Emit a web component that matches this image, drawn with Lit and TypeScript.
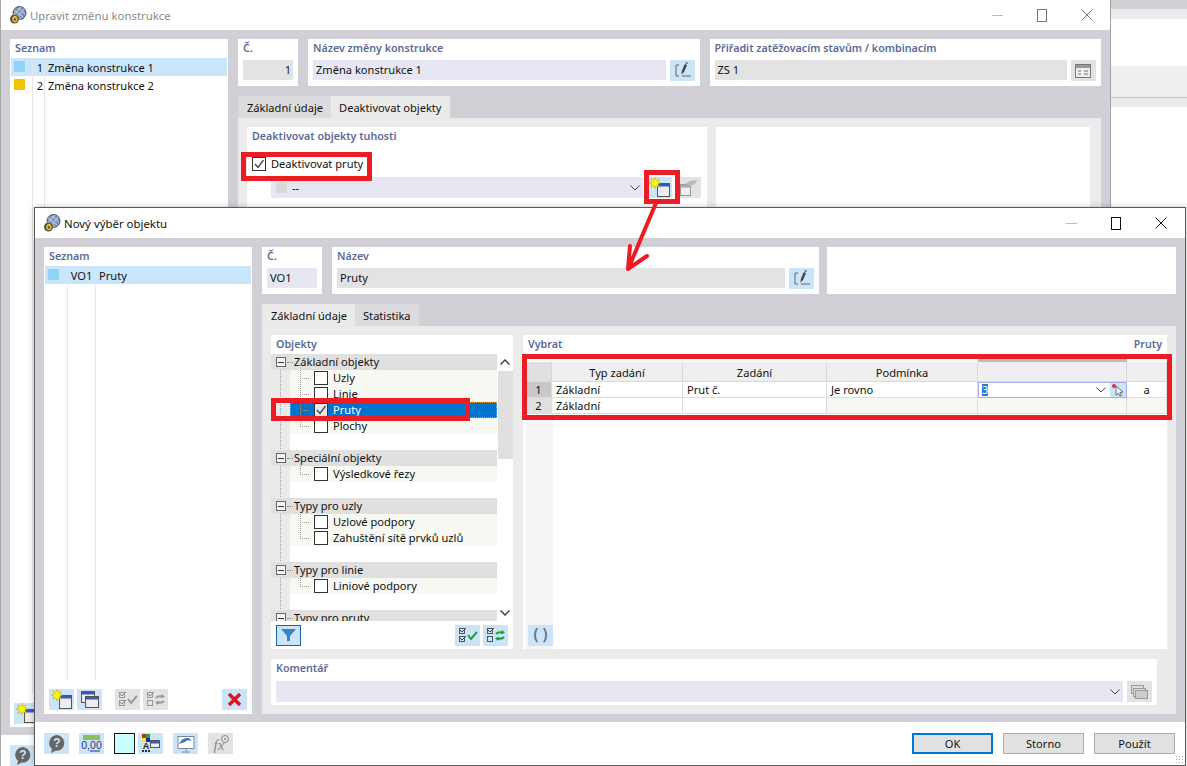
import {LitElement, html, css, svg} from 'lit';
import {customElement} from 'lit/decorators.js';

const star = (x = 5, y = 5, r = 5) => {
	const pts = [];
	for (let i = 0; i < 16; i++) {
		const a = -Math.PI / 2 + (i * Math.PI) / 8;
		const d = i % 2 ? r * 0.5 : r;
		pts.push(`${(x + d * Math.cos(a)).toFixed(1)},${(y + d * Math.sin(a)).toFixed(1)}`);
	}
	return svg`<polygon points=${pts.join(' ')} fill="#fbf500" stroke="#a89a10" stroke-width=".4"/>`;
};

const box = (w: number, h: number, body: unknown) =>
	html`<svg width=${w} height=${h} viewBox="0 0 ${w} ${h}">${body}</svg>`;

const miniWin = (x: number, y: number, w: number, h: number, g = false) => svg`
	<rect x=${x + 0.5} y=${y + 0.5} width=${w} height=${h} fill=${g ? '#eee' : '#ececec'} stroke=${g ? '#999' : '#555'}/>
	<rect x=${x + 1} y=${y + 1} width=${w - 1} height="2.500" fill=${g ? '#aaa' : '#3f57b5'}/>`;

const icons = {
	add: () => box(25, 21, svg`${miniWin(10, 6, 12, 13)}${star(8, 6, 6)}`),
	addOff: () => box(25, 21, svg`${miniWin(4, 7, 10, 11, true)}<path d="M9 7l5-3 7-1-2 4-5 2z" fill="#bbb"/>`),
	copy: () => box(25, 21, svg`${miniWin(4, 2, 13, 11)}${miniWin(8, 7, 13, 11)}`),
	checks: (off = false) =>
		box(25, 21, svg`
		<rect x="4.5" y="3.5" width="5" height="5" fill="none" stroke=${off ? '#999' : '#555'}/>
		<rect x="4.5" y="11.5" width="5" height="5" fill="none" stroke=${off ? '#999' : '#555'}/>
		<path d="M5 5l2 2 4-4M5 13l2 2 4-4" fill="none" stroke=${off ? '#888' : '#444'}/>
		<path d="M13 10l3 4 6-7" fill="none" stroke=${off ? '#999' : '#18a030'} stroke-width="2"/>`),
	swap: (off = false) =>
		box(25, 21, svg`
		<rect x="4.5" y="3.5" width="5" height="5" fill="none" stroke=${off ? '#999' : '#555'}/>
		<rect x="4.5" y="11.5" width="5" height="5" fill="none" stroke=${off ? '#999' : '#555'}/>
		<path d="M5 5l2 2 4-4" fill="none" stroke=${off ? '#888' : '#444'}/>
		<path d="M13 9q3-3 7-1M21 12q-3 3-7 1" fill="none" stroke=${off ? '#999' : '#18a030'} stroke-width="2"/>
		<path d="M19 5l3 3-4 1zM15 16l-3-3 4-1z" fill=${off ? '#999' : '#18a030'}/>`),
	del: () => box(25, 21, svg`<path d="M7 5l11 11M18 5L7 16" stroke="#e8101c" stroke-width="3.4"/>`),
	edit: () => box(25, 21, svg`
		<path d="M9 5H6v11h3M12 16h9" fill="none" stroke="#666"/>
		<path d="M11.500 14.500l.3-3.500 3-7 2.200 1-3 7z" fill="#444"/><path d="M15.300 3l.5-1 2.200 1-.5 1z" fill="#444"/>`),
	table: () => box(25, 21, svg`
		<rect x="4.5" y="4.5" width="15" height="13" fill="#eee" stroke="#777"/>
		<rect x="5" y="5" width="14" height="3" fill="#999"/>
		<path d="M7 11h3M13 11h4M7 14h3M13 14h4" stroke="#777"/>`),
	filter: () => box(25, 21, svg`<path d="M5 5h15l-6 7v5h-3v-5z" fill="#3d80c4"/>`),
	stack: () => box(25, 21, svg`
		<rect x="4.5" y="4.5" width="12" height="8" fill="#ddd" stroke="#999"/>
		<rect x="6.5" y="7.5" width="12" height="8" fill="#ddd" stroke="#999"/>
		<rect x="8.5" y="9.5" width="12" height="8" fill="#ccc" stroke="#999"/>`),
	help: () => box(25, 21, svg`
		<path d="M13 2a8 8 0 0 1 2 15.500a8 8 0 0 1-3 0L7 20l1-4a8 8 0 0 1 5-14z" fill="#666"/>
		<text x="13" y="14" font-size="12" font-weight="700" text-anchor="middle" fill="#cbe4f8" font-family="Liberation Sans">?</text>`),
	num: () => box(25, 21, svg`
		<rect x="4" y="2" width="17" height="5" fill="#8cc05c"/>
		<text x="12.500" y="16" font-size="10.500" text-anchor="middle" fill="#23367c" font-family="Liberation Sans">0,00</text>
		<path d="M11 18h10" stroke="#23367c"/>`),
	colors: () => box(25, 21, svg`
		<rect x="4" y="1" width="4" height="4" fill="#d22"/><rect x="8" y="1" width="4" height="4" fill="#2a2"/>
		<rect x="4" y="5" width="4" height="4" fill="#ee2"/><rect x="8" y="5" width="4" height="4" fill="#22b"/>
		<text x="8" y="16" font-size="9" font-weight="700" text-anchor="middle" fill="#222" font-family="Liberation Sans">A</text>
		<path d="M4 18h2M7 18h2M10 18h2" stroke="#333" stroke-width="2"/>
		${miniWin(12, 7, 9, 7)}`),
	view: () => box(25, 21, svg`
		<rect x="5" y="3.500" width="16" height="12" fill="#fff" stroke="#789"/>
		<path d="M6 11q3-7 10-6l3 3q-5-2-7 1l-3 1z" fill="#3f76ac"/>
		<path d="M13 16v2M9 19h8" stroke="#789"/>`),
	fx: () => box(25, 21, svg`
		<text x="11" y="17" font-size="15" font-style="italic" text-anchor="middle" fill="#888" font-family="Liberation Serif">fx</text>
		<circle cx="17" cy="6" r="3.500" fill="none" stroke="#888"/><circle cx="17" cy="6" r="1" fill="#888"/>`),
	logo: () => box(20, 20, svg`
		<ellipse cx="11.500" cy="8" rx="6.500" ry="6.500" fill="#7d94b8" stroke="#4a5468"/>
		<path d="M6 5l9 7M10 3l7 6M5 9l8 5M13 2l-8 9M16 4l-8 10" stroke="#e4eaf2" stroke-width=".7"/>
		<circle cx="6.500" cy="14" r="4.500" fill="#55554c"/>
		<path d="M8.500 11.500q-3-.5-3.500 2.500a2 2 0 1 0 2-1.500" fill="none" stroke="#f2c41c" stroke-width="1.500"/>`),
	chev: () => box(10, 6, svg`<path d="M.5.5L5 5 9.500.5" fill="none" stroke="#444"/>`),
	check: () => box(12, 12, svg`<path d="M2 6l3 3.500L10.500 2" fill="none" stroke="#444" stroke-width="1.300"/>`),
	pick: () => box(16, 14, svg`<path d="M6 3l7 6-3 .5 1.500 3-1.500.7-1.500-3-2.500 2z" fill="#f4f4f4" stroke="#456" stroke-width=".8"/><circle cx="4" cy="3" r="2" fill="#e03040"/>`),
};

const ctrl = (dim: boolean) => html`
	<div class="ctrl ${dim ? 'dim' : ''}">
		<span class="min"></span><span class="max"></span>
		<svg width="12" height="12" viewBox="0 0 12 12"><path d="M.5.5l11 11M11.500.5l-11 11" stroke="currentColor" fill="none"/></svg>
	</div>`;

const tree = [
	{h: 'Základní objekty', c: ['Uzly', 'Linie', 'Pruty', 'Plochy']},
	{h: 'Speciální objekty', c: ['Výsledkové řezy']},
	{h: 'Typy pro uzly', c: ['Uzlové podpory', 'Zahuštění sítě prvků uzlů']},
	{h: 'Typy pro linie', c: ['Liniové podpory']},
	{h: 'Typy pro pruty', c: []},
];

@customElement('app-root')
export class AppRoot extends LitElement {
	static styles = css`
		:host {
			display: block;
			position: relative;
			width: 1187px;
			height: 766px;
			overflow: hidden;
			background: #fff;
			font: 11.100px 'Noto Sans', 'Liberation Sans', sans-serif;
			color: #111;
		}
		* { box-sizing: border-box; }
		svg { display: block; }

		.desk { display: flex; flex-direction: column; height: 160px; padding-left: 1110px; }
		.desk i { display: block; }
		.d1 { height: 9px; background: #d0d0d5; }
		.d2 { height: 10px; background: #ebebeb; }
		.d3 { height: 47px; background: #fff; }
		.d4 { height: 32px; background: #efefef; border-bottom: 1px solid #c4c4d0; }
		.d5 { height: 9px; background: #ebebeb; }

		.win { position: absolute; display: flex; flex-direction: column; background: #fff; }
		.back { left: 0; top: 0; width: 1111px; height: 766px; border-left: 1px solid #a8a8a8; border-right: 1px solid #a0a0a4; }
		.front { left: 34px; top: 207px; width: 1152px; height: 559px; border: 1px solid #5a5a5a; box-shadow: 0 0 6px rgba(0, 0, 0, .25); }

		.title { height: 30px; flex: none; display: flex; align-items: center; padding-left: 7px; gap: 2px; font-size: 11.400px; }
		.back .title { color: #8a8a8a; }
		.ctrl { margin-left: auto; display: flex; align-items: center; gap: 34px; padding-right: 18px; color: #111; }
		.ctrl.dim { color: #777; padding-right: 17px; }
		.min { width: 11px; border-top: 1px solid #bbb; }
		.max { width: 10px; height: 13px; border: 1px solid currentColor; }
		.front .max { border-width: 1.500px; }

		.body { flex: 1; min-height: 0; display: flex; background: #d0d0d6; padding: 9px 9px 8px; gap: 10px; }
		.foot { flex: none; display: flex; align-items: center; background: #fff; }
		.back .foot { height: 31px; padding: 10px 0 0 9px; }
		.front .foot { height: 43px; padding: 0 10px 0 9px; gap: 10px; position: relative; }

		.panel { background: #fff; }
		.lab { display: block; font-weight: 600; color: #5b6b98; line-height: 16px; padding: 1px 0 0 5px; font-size: 10.700px; white-space: nowrap; }

		.list { display: flex; flex-direction: column; flex: none; }
		.back .list { width: 218px; }
		.front .list { width: 208px; }
		.rows { flex: 1; display: flex; flex-direction: column; min-height: 0; margin-top: 2px; }
		.rw { display: grid; height: 18px; line-height: 20px; margin: 0 1px; white-space: nowrap; }
		.back .rw { grid-template-columns: 21px 12px 1fr; }
		.front .rw { grid-template-columns: 22px 28px 1fr; }
		.rw.sel { background: #cbe6fb; }
		.rw > * { border-left: 1px solid #e4e4e4; }
		.rw > :first-child { border-left: 0; }
		.sw { padding: 3px 0 0 3px; }
		.sw b { display: block; width: 11px; height: 11px; }
		.n { text-align: center; }
		.back .n { text-align: right; padding-right: 1px; }
		.nm { padding-left: 3px; }
		.fill { flex: 1; margin: 0 1px 9px; display: grid; }
		.back .fill { grid-template-columns: 21px 12px 1fr; }
		.front .fill { grid-template-columns: 22px 28px 1fr; }
		.fill i { border-left: 1px solid #e8e8e8; }
		.fill i:first-child { border: 0; }
		.btm { display: flex; align-items: center; height: 21px; margin: 0 0 4px 5px; gap: 3px; }
		.back .btm { margin-left: 4px; margin-bottom: 3px; }

		.ib { width: 25px; height: 21px; flex: none; background: #cbe4f8; }
		.ib.off { background: #e3e3e3; }
		.ib.sel { border: 1.500px solid #1565b0; }
		.ib.sel svg { margin: -1.500px; }
		.sp { width: 7px; }
		.push { margin-left: auto; }
		.delb { margin-right: 5px; }

		.main { flex: 1; min-width: 0; display: flex; flex-direction: column; }
		.top { display: flex; height: 47px; flex: none; gap: 10px; }
		.front .top { gap: 8px; }
		.fld { display: flex; gap: 4px; padding: 0 5px; height: 21px; margin-top: 4px; }
		.inp { flex: 1; min-width: 0; height: 20px; line-height: 20px; padding: 0 3px; background: #e3e3e3; white-space: nowrap; overflow: hidden; }
		.inp.b { background: #e6e7f2; }
		.inp.r { text-align: right; padding-right: 2px; }
		.c { width: 60px; flex: none; }
		.g { flex: 1; min-width: 0; }
		.nazev { width: 487px; flex: none; margin-left: 2px; }

		.tabs { display: flex; height: 22px; flex: none; margin-top: 10px; }
		.tab { line-height: 21px; padding: 1px 8px 0; background: #dcdcdf; white-space: nowrap; }
		.tab:first-child { padding-left: 9px; }
		.tab.on { background: #ebebeb; }
		.page { flex: 1; min-height: 0; background: #ebebeb; padding: 9px; display: flex; flex-direction: column; gap: 9px; }
		.back .page { flex-direction: row; padding-right: 11px; }
		.dp { width: 460px; flex: none; display: flex; flex-direction: column; }
		.cbrow { display: flex; align-items: center; gap: 5px; margin: 13px 0 0 5px; height: 14px; }
		.cbrow span:last-child { margin-bottom: 2px; }
		.cb { width: 14px; height: 14px; flex: none; background: #fff; border: 1px solid #333; display: block; }
		.cmb { display: flex; align-items: center; gap: 4px; margin: 6px 6px 0 24px; }
		.sel-b { flex: 1; display: flex; align-items: center; gap: 5px; height: 21px; padding: 0 3px 0 5px; background: #e6e7f2; min-width: 0; }
		.sel-b span { flex: 1; }
		.sel-b em { width: 11px; height: 11px; background: #d9d9d9; }

		.mid { display: flex; height: 314px; flex: none; gap: 10px; }
		.obj { width: 242px; flex: none; display: flex; flex-direction: column; }
		.treebox { height: 267px; flex: none; overflow: hidden; display: flex; margin-top: 2px; }
		.tree { width: 226px; flex: none; }
		.th, .tc, .tb { height: 16px; display: flex; align-items: center; line-height: 16px; white-space: nowrap; }
		.th { background: #e0e0e0; padding-left: 5px; }
		.exp { width: 10px; height: 10px; border: 1px solid #666; background: #f4f4f4; flex: none; position: relative; margin-right: 1px; }
		.exp::after { content: ''; position: absolute; left: 1px; right: 1px; top: 3.500px; border-top: 1px solid #333; }
		.dots { width: 6px; border-top: 1px dotted #888; margin-right: 1px; }
		.tc, .tb { padding-left: 19px; background-image: repeating-linear-gradient(#a0a0a0 0 1px, transparent 1px 2px); background-size: 1px 100%; background-position: 9px 0; background-repeat: no-repeat; background-color: #ebebeb; }
		.tc > div { flex: 1; height: 16px; background: #f7f8f2; display: flex; align-items: center; gap: 5px; }
		.tb > div { flex: 1; height: 16px; background: #fff; }
		.twig { width: 19px; height: 16px; flex: none; background-image: repeating-linear-gradient(#999 0 1px, transparent 1px 2px), repeating-linear-gradient(90deg, #999 0 1px, transparent 1px 2px); background-repeat: no-repeat; background-size: 1px 100%, 9px 1px; background-position: 10px 0, 10px 8px; }
		.tc.last .twig { background-size: 1px 9px, 9px 1px; }
		.tc.hi > div { background: #0074cc; color: #fff; outline: 1px dotted #e89a30; outline-offset: -1px; }
		.tc.hi .cb { background: #e8e8e8; }
		.scr { flex: 1; display: flex; flex-direction: column; align-items: center; padding-top: 5px; }
		.scr path { stroke-width: 1.500; }
		.thumb { width: 15px; height: 88px; margin-top: 6px; background: #e0e0e0; }
		.scr .down { margin-top: auto; margin-bottom: 5px; }
		.up { transform: scaleY(-1); }
		.otb { flex: 1; display: flex; align-items: center; padding: 0 5px; gap: 3px; }

		.vyb { flex: 1; min-width: 0; display: flex; flex-direction: column; }
		.vh { display: flex; justify-content: space-between; padding-right: 5px; height: 20px; flex: none; }
		.gridw { flex: 1; min-height: 0; margin-left: 3px; background: linear-gradient(90deg, #f5f5f5 27px, #fff 27px); display: flex; flex-direction: column; }
		.tbl { display: grid; grid-template-columns: 26px 131px 144px 151px 149px 40px; grid-template-rows: 7px 20px 16px 16px; line-height: 16px; }
		.tbl > div { border-right: 1px solid #ddd; border-bottom: 1px solid #ddd; padding-left: 4px; white-space: nowrap; overflow: hidden; }
		.tbl .hd { background: #efefef; text-align: center; padding: 3px 0 0; border-color: #d8d8d8; }
		.tbl .corner { background: #e0e0e0; }
		.tbl .rn { background: #e0e0e0; text-align: center; padding: 0; }
		.tbl .rn.a { background: #c8c8c8; }
		.tbl .sliver { background: #fff; padding: 0; border: 0; }
		.tbl .dark { background: #bdbdbd; border: 0; }
		.tbl .soft { background: #f7f8f2; }
		.tbl .ctr { text-align: center; padding: 0; }
		.tbl .ed { display: flex; align-items: center; padding: 0; border: 1px solid #a8aee6; }
		.ed mark { background: #2f7ad0; color: #fff; margin-left: 3px; line-height: 12px; }
		.ed svg:first-of-type { margin-left: auto; margin-right: 4px; }
		.ed .pk { width: 16px; height: 14px; background: #cbe4f8; }
		.pb { margin: auto 0 3px 2px; }
		.par { display: block; text-align: center; line-height: 19px; font-size: 15.500px; font-weight: 600; color: #5f7088; }

		.kom { height: 46px; flex: none; margin: 1px 10px 0 0; }
		.kf { display: flex; gap: 4px; padding: 0 5px; margin-top: 5px; }

		.btn { width: 81px; height: 21px; background: #e1e1e1; border: 1px solid #adadad; text-align: center; line-height: 19px; flex: none; }
		.btn.def { border: 2px solid #0078d7; line-height: 17px; }
		.tools { display: flex; gap: 10px; align-items: center; margin-right: auto; }
		.swatch { width: 21px; height: 21px; background: #c9ffff; border: 1px solid #111; margin-right: -7px; }
		.grip { position: absolute; right: 1px; bottom: 1px; width: 9px; height: 9px; background-image: radial-gradient(#aaa 1px, transparent 1px); background-size: 3px 3px; }

		.mark { position: absolute; border: 5px solid #ed1c24; pointer-events: none; }
		.m1 { left: 241px; top: 152px; width: 131px; height: 29px; }
		.m2 { left: 644px; top: 170px; width: 36px; height: 34px; }
		.m3 { left: 271px; top: 398px; width: 199px; height: 23px; }
		.m4 { left: 522px; top: 354px; width: 650px; height: 66px; }
		.arrow { position: absolute; left: 620px; top: 200px; pointer-events: none; }
	`;

	private list(rows: unknown, bottom: unknown) {
		return html`<div class="panel list">
			<span class="lab">Seznam</span>
			<div class="rows">${rows}<div class="fill"><i></i><i></i><i></i></div></div>
			${bottom}
		</div>`;
	}

	private renderBack() {
		return html`<div class="win back">
			<div class="title">${icons.logo()}<span>Upravit změnu konstrukce</span>${ctrl(true)}</div>
			<div class="body">
				${this.list(
					html`
						<div class="rw sel"><span class="sw"><b style="background:#90d4f5"></b></span><span class="n">1</span><span class="nm">Změna konstrukce 1</span></div>
						<div class="rw"><span class="sw"><b style="background:#f5c400"></b></span><span class="n">2</span><span class="nm">Změna konstrukce 2</span></div>`,
					html`<div class="btm"><div class="ib">${icons.add()}</div></div>`
				)}
				<div class="main">
					<div class="top">
						<div class="panel c"><span class="lab">Č.</span><div class="fld"><div class="inp r">1</div></div></div>
						<div class="panel g"><span class="lab">Název změny konstrukce</span><div class="fld"><div class="inp b">Změna konstrukce 1</div><div class="ib">${icons.edit()}</div></div></div>
						<div class="panel g"><span class="lab">Přiřadit zatěžovacím stavům / kombinacím</span><div class="fld"><div class="inp">ZS 1</div><div class="ib off">${icons.table()}</div></div></div>
					</div>
					<div class="tabs"><div class="tab">Základní údaje</div><div class="tab on">Deaktivovat objekty</div></div>
					<div class="page">
						<div class="panel dp">
							<span class="lab">Deaktivovat objekty tuhosti</span>
							<div class="cbrow"><span class="cb on">${icons.check()}</span><span>Deaktivovat pruty</span></div>
							<div class="cmb">
								<div class="sel-b"><em></em><span>--</span>${icons.chev()}</div>
								<div class="ib">${icons.add()}</div>
								<div class="ib off">${icons.addOff()}</div>
							</div>
						</div>
						<div class="panel g"></div>
					</div>
				</div>
			</div>
			<div class="foot"><div class="ib">${icons.help()}</div></div>
		</div>`;
	}

	private renderTree() {
		return tree.map((g, gi) => html`
			<div class="th"><span class="exp"></span><span class="dots"></span>${g.h}</div>
			${g.c.map((c, i) => html`
				<div class="tc ${c === 'Pruty' ? 'hi' : ''} ${i === g.c.length - 1 ? 'last' : ''}"><div>
					<span class="twig"></span>
					<span class="cb ${c === 'Pruty' ? 'on' : ''}">${c === 'Pruty' ? icons.check() : ''}</span>
					<span>${c}</span>
				</div></div>`)}
			${gi < tree.length - 1 ? html`<div class="tb"><div></div></div>` : ''}`);
	}

	private renderFront() {
		return html`<div class="win front">
			<div class="title">${icons.logo()}<span>Nový výběr objektu</span>${ctrl(false)}</div>
			<div class="body">
				${this.list(
					html`<div class="rw sel"><span class="sw"><b style="background:#90d4f5"></b></span><span class="n">VO1</span><span class="nm">Pruty</span></div>`,
					html`<div class="btm">
						<div class="ib">${icons.add()}</div><div class="ib">${icons.copy()}</div><span class="sp"></span>
						<div class="ib off">${icons.checks(true)}</div><div class="ib off">${icons.swap(true)}</div>
						<div class="ib push delb">${icons.del()}</div>
					</div>`
				)}
				<div class="main">
					<div class="top">
						<div class="panel c"><span class="lab">Č.</span><div class="fld"><div class="inp b">VO1</div></div></div>
						<div class="panel nazev"><span class="lab">Název</span><div class="fld"><div class="inp">Pruty</div><div class="ib">${icons.edit()}</div></div></div>
						<div class="panel g"></div>
					</div>
					<div class="tabs"><div class="tab on">Základní údaje</div><div class="tab">Statistika</div></div>
					<div class="page">
						<div class="mid">
							<div class="panel obj">
								<span class="lab">Objekty</span>
								<div class="treebox">
									<div class="tree">${this.renderTree()}</div>
									<div class="scr">
										<span class="up">${icons.chev()}</span>
										<div class="thumb"></div>
										<span class="down">${icons.chev()}</span>
									</div>
								</div>
								<div class="otb">
									<div class="ib sel">${icons.filter()}</div>
									<div class="ib push">${icons.checks()}</div>
									<div class="ib">${icons.swap()}</div>
								</div>
							</div>
							<div class="panel vyb">
								<div class="vh"><span class="lab">Vybrat</span><span class="lab">Pruty</span></div>
								<div class="gridw">
									<div class="tbl">
										<div class="sliver"></div><div class="sliver"></div><div class="sliver"></div><div class="sliver"></div><div class="dark"></div><div class="sliver"></div>
										<div class="hd corner"></div><div class="hd">Typ zadání</div><div class="hd">Zadání</div><div class="hd">Podmínka</div><div class="hd"></div><div class="hd"></div>
										<div class="rn a">1</div><div>Základní</div><div>Prut č.</div><div>Je rovno</div>
										<div class="ed"><mark>3</mark>${icons.chev()}<span class="pk">${icons.pick()}</span></div>
										<div class="ctr">a</div>
										<div class="rn">2</div><div>Základní</div><div></div><div class="soft"></div><div class="soft"></div><div class="soft"></div>
									</div>
									<div class="ib pb"><span class="par">( )</span></div>
								</div>
							</div>
						</div>
						<div class="panel kom">
							<span class="lab">Komentář</span>
							<div class="kf"><div class="sel-b"><span></span>${icons.chev()}</div><div class="ib off">${icons.stack()}</div></div>
						</div>
					</div>
				</div>
			</div>
			<div class="foot">
				<div class="tools">
					<div class="ib">${icons.help()}</div>
					<div class="ib">${icons.num()}</div>
					<div class="swatch"></div>
					<div class="ib">${icons.colors()}</div>
					<div class="ib">${icons.view()}</div>
					<div class="ib off">${icons.fx()}</div>
				</div>
				<div class="btn def">OK</div><div class="btn">Storno</div><div class="btn">Použít</div>
				<span class="grip"></span>
			</div>
		</div>`;
	}

	render() {
		return html`
			<div class="desk"><i class="d1"></i><i class="d2"></i><i class="d3"></i><i class="d4"></i><i class="d5"></i></div>
			${this.renderBack()}
			${this.renderFront()}
			<div class="mark m1"></div>
			<div class="mark m2"></div>
			<div class="mark m3"></div>
			<div class="mark m4"></div>
			<svg class="arrow" width="60" height="80" viewBox="0 0 60 80">
				<path d="M36 3L9 67M10 46L8 69 27 56" fill="none" stroke="#ed1c24" stroke-width="4" stroke-linecap="round" stroke-linejoin="round"/>
			</svg>`;
	}
}
